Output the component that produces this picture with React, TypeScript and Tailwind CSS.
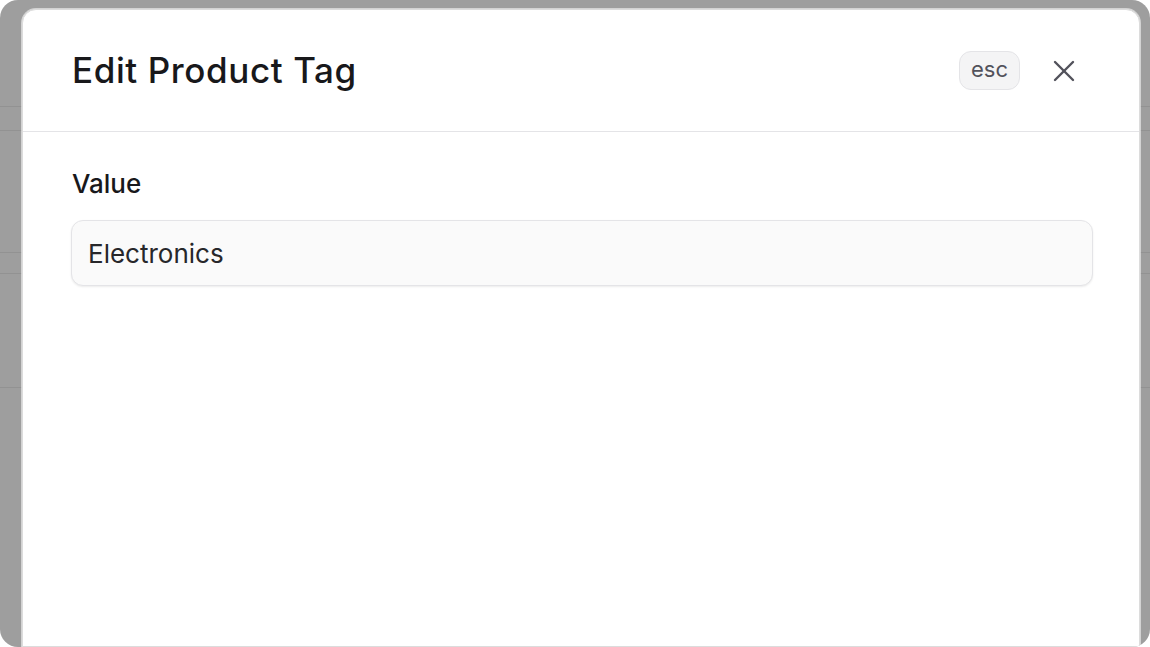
import { X } from 'lucide-react';

const rows = [98, 24, 122, 21, 114, 260];

export default function App() {
  return (
    <div className="min-h-screen bg-white" style={{ fontFamily: 'Inter, "Noto Sans", sans-serif' }}>
      <div className="relative h-[647px] w-[1150px] overflow-hidden rounded-[18px] bg-[#9e9e9e]">
        {/* page behind the overlay */}
        <div className="flex flex-col pt-[9px]">
          {rows.map((h, i) => (
            <div key={i} className="border-b border-[#929292]" style={{ height: h }} />
          ))}
        </div>

        {/* modal */}
        <div className="absolute left-[22px] top-[9px] bottom-0 w-[1118px] rounded-t-[14px] border border-[#dcdcdc] bg-white shadow-[0_0_0_1px_rgba(255,255,255,0.55)]">
          <div className="flex h-[122px] items-center justify-between border-b border-[#e4e4e7] pl-[49px] pr-[47px]">
            <h1 className="text-[35px] font-medium leading-none tracking-[0.6px] text-[#18181b]">Edit Product Tag</h1>
            <div className="flex items-center gap-[16px]">
              <span className="flex h-[39px] w-[61px] items-center justify-center rounded-[12px] border border-[#e4e4e7] bg-[#f4f4f5] pb-[2px] text-[22px] text-[#52525b]">
                esc
              </span>
              <button className="flex h-[56px] w-[56px] items-center justify-center text-[#52525b]">
                <X size={36} strokeWidth={1.6} />
              </button>
            </div>
          </div>
          <div className="flex flex-col gap-[19px] pl-[48px] pr-[46px] pt-[35px]">
            <label className="pl-[1px] text-[26px] font-medium leading-[34px] text-[#18181b]">Value</label>
            <div className="flex h-[66px] items-center rounded-[12px] border border-[#e4e4e7] bg-[#fafafa] px-[16px] shadow-[0_1px_2px_rgba(0,0,0,0.08)]">
              <span className="text-[26px] text-[#27272a]">Electronics</span>
            </div>
          </div>
        </div>
      </div>
    </div>
  );
}
